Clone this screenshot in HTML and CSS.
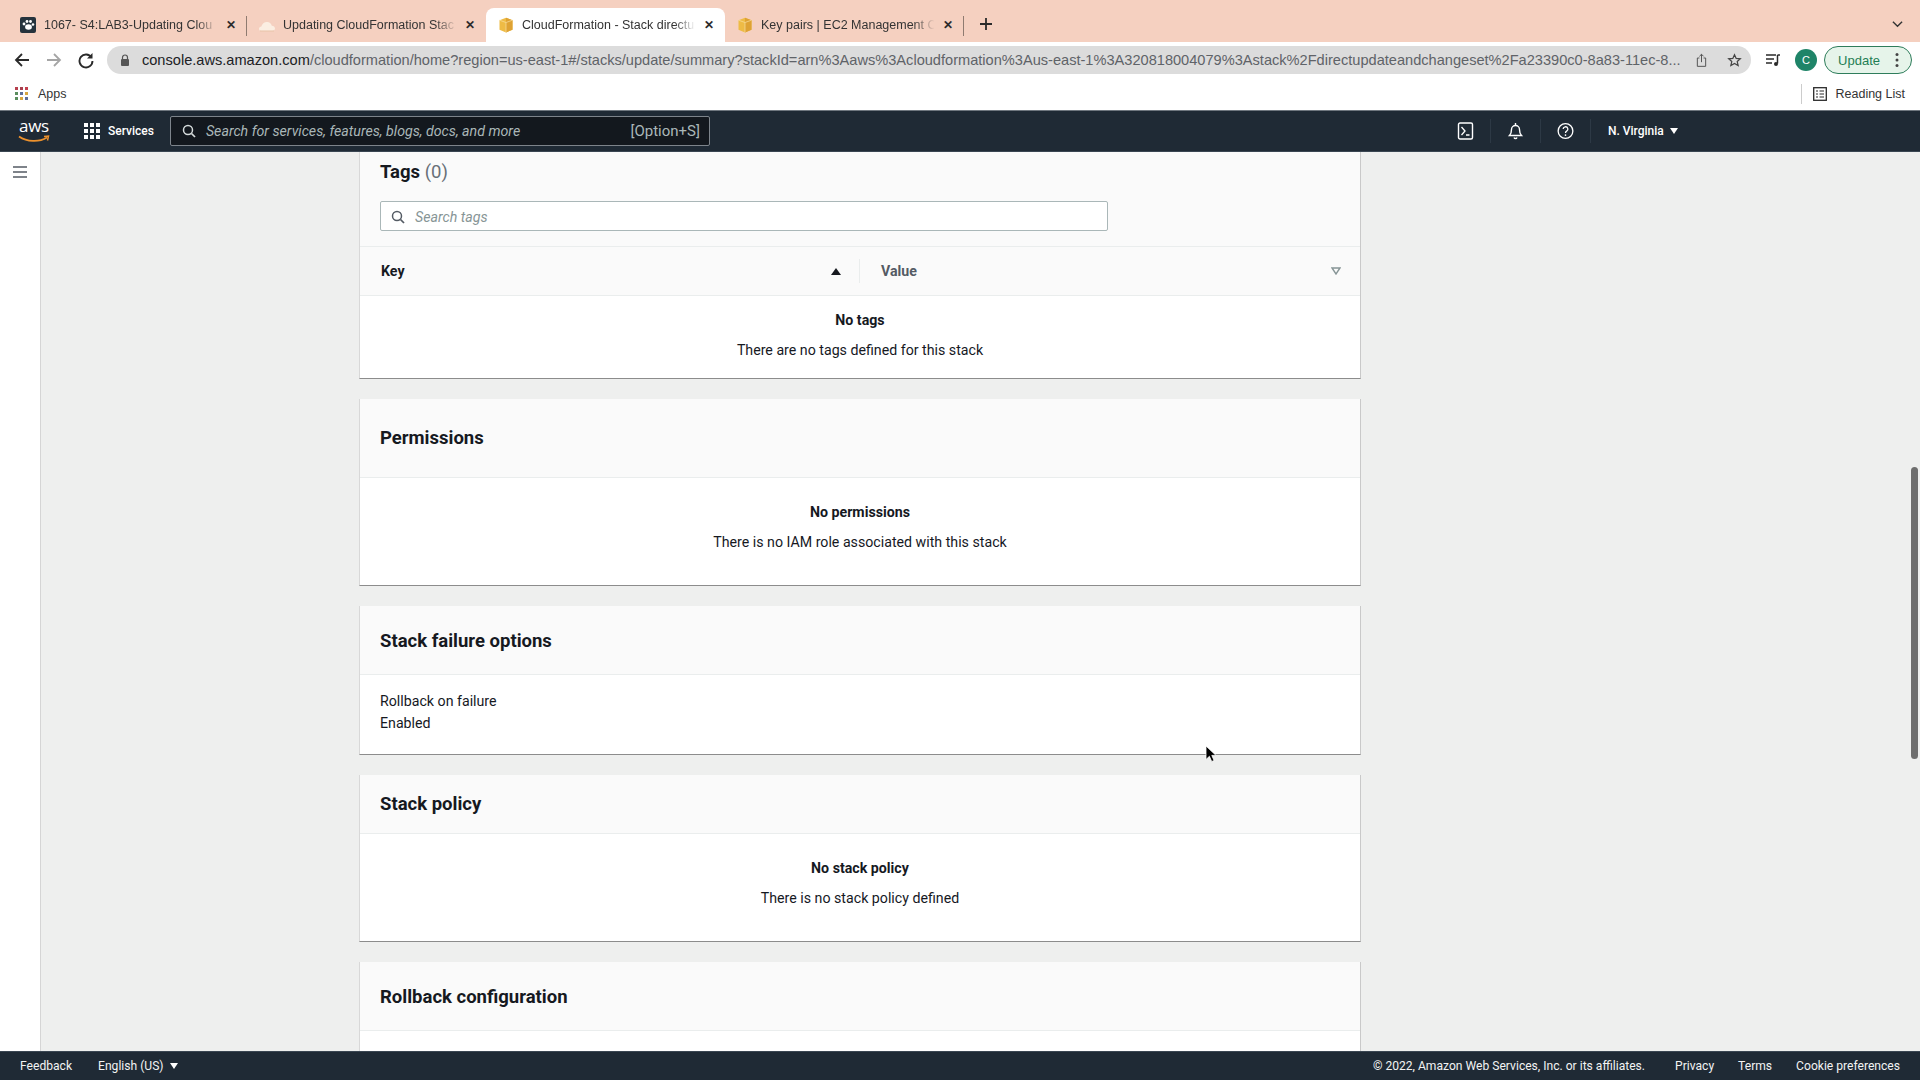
FILE: index.html
```html
<!DOCTYPE html>
<html lang="en">
<head>
    <meta charset="UTF-8">
    <meta name="viewport" content="width=device-width, initial-scale=1.0">
    <title>CloudFormation - Stack directupdateandchangeset</title>
    <link rel="stylesheet" href="styles.css">
</head>
<body>
    <div class="tabstrip">
        <div class="tab tab-sep">
            <svg class="favicon" viewBox="0 0 16 16"><rect width="16" height="16" rx="2" fill="#25333d"/><ellipse cx="8.5" cy="10" rx="3.4" ry="2.8" fill="#fff"/><circle cx="4" cy="7" r="1.4" fill="#fff"/><circle cx="7" cy="4.5" r="1.4" fill="#fff"/><circle cx="10.5" cy="4.5" r="1.4" fill="#fff"/><circle cx="13" cy="7.5" r="1.3" fill="#fff"/></svg>
            <span class="tab-title">1067- S4:LAB3-Updating Clou</span>
            <span class="tab-close">&#10005;</span>
        </div>
        <div class="tab">
            <svg class="favicon" viewBox="0 0 16 16"><path d="M2.500 14C1 14 0 13 0 11.700s1-2.300 2.400-2.300C3 7 5.200 5 8 5c2.400 0 4.300 1.600 4.800 3.800 1.800 0 3.200 1.200 3.200 2.700S14.700 14 13.200 14z" fill="#fbeee2"/><path d="M1 14h14" stroke="#e8c3a8" stroke-width="1"/></svg>
            <span class="tab-title">Updating CloudFormation Stac</span>
            <span class="tab-close">&#10005;</span>
        </div>
        <div class="tab tab-active">
            <svg class="favicon" viewBox="0 0 16 16"><path d="M1.500 3.200 8 .8l6.500 2.400v9.600L8 15.400l-6.500-2.600z" fill="#eebb45"/><path d="M8 .8l6.500 2.400v9.600L8 15.400z" fill="#dea233"/><path d="M1.500 3.200 8 5.500l6.500-2.300M8 5.500v9.900" fill="none" stroke="#f8e0a0" stroke-width=".7"/></svg>
            <span class="tab-title">CloudFormation - Stack directu</span>
            <span class="tab-close">&#10005;</span>
        </div>
        <div class="tab tab-sep">
            <svg class="favicon" viewBox="0 0 16 16"><path d="M1.500 3.200 8 .8l6.500 2.400v9.600L8 15.400l-6.500-2.600z" fill="#eebb45"/><path d="M8 .8l6.500 2.400v9.600L8 15.400z" fill="#dea233"/><path d="M1.500 3.200 8 5.500l6.500-2.300M8 5.500v9.900" fill="none" stroke="#f8e0a0" stroke-width=".7"/></svg>
            <span class="tab-title">Key pairs | EC2 Management C</span>
            <span class="tab-close">&#10005;</span>
        </div>
        <svg class="new-tab" viewBox="0 0 14 14"><path d="M7 1v12M1 7h12" stroke="#2b2b2b" stroke-width="1.800"/></svg>
        <svg class="tab-menu" viewBox="0 0 12 8"><path d="M1 1.500 6 6.500l5-5" fill="none" stroke="#333" stroke-width="1.500"/></svg>
    </div>

    <div class="toolbar">
        <svg class="tool-btn" viewBox="0 0 18 18"><path d="M16 9H3M9 3 3 9l6 6" fill="none" stroke="#2a2a2a" stroke-width="1.800"/></svg>
        <svg class="tool-btn" viewBox="0 0 18 18"><path d="M2 9h13M9 3l6 6-6 6" fill="none" stroke="#a5a5a5" stroke-width="1.800"/></svg>
        <svg class="tool-btn" viewBox="0 0 18 18"><path d="M14.500 6.500A6.500 6.500 0 1 0 15.500 10" fill="none" stroke="#2a2a2a" stroke-width="1.900"/><path d="M15.500 2v5.500H10z" fill="#2a2a2a"/></svg>
        <div class="omnibox">
            <svg class="lock" viewBox="0 0 10 12"><path d="M2.500 5V3.500a2.500 2.500 0 0 1 5 0V5" fill="none" stroke="#555" stroke-width="1.200"/><rect x="1" y="5" width="8" height="7" rx="1" fill="#555"/></svg>
            <span class="url"><span class="url-host">console.aws.amazon.com</span>/cloudformation/home?region=us-east-1#/stacks/update/summary?stackId=arn%3Aaws%3Acloudformation%3Aus-east-1%3A320818004079%3Astack%2Fdirectupdateandchangeset%2Fa23390c0-8a83-11ec-8...</span>
            <svg class="omni-icon" viewBox="0 0 14 18"><path d="M4.500 6H2v10h10V6H9.500M7 11V1.500M4.500 4 7 1.500 9.500 4" fill="none" stroke="#555" stroke-width="1.200"/></svg>
            <svg class="omni-icon" viewBox="0 0 16 16"><path d="M8 1.800l1.800 4 4.400.4-3.300 2.900 1 4.300L8 11.200l-3.900 2.200 1-4.300-3.300-2.900 4.400-.4z" fill="none" stroke="#444" stroke-width="1.300"/></svg>
        </div>
        <svg class="media-icon" viewBox="0 0 16 14"><path d="M1 2h10M1 6h8M1 10h6" stroke="#2a2a2a" stroke-width="1.500"/><path d="M12.500 2v8.500" stroke="#2a2a2a" stroke-width="1.500"/><path d="M12.500 2H15" stroke="#2a2a2a" stroke-width="1.500"/><circle cx="11" cy="11" r="2" fill="#2a2a2a"/></svg>
        <div class="avatar">C</div>
        <div class="update-btn">
            <span>Update</span>
            <svg class="update-dots" viewBox="0 0 4 16"><circle cx="2" cy="2.500" r="1.500"/><circle cx="2" cy="8" r="1.500"/><circle cx="2" cy="13.500" r="1.500"/></svg>
        </div>
    </div>

    <div class="bookmarks">
        <svg class="apps-icon" viewBox="0 0 14 14">
            <rect width="3" height="3" fill="#b6404e"/><rect x="5" width="3" height="3" fill="#a8404e"/><rect x="10" width="3" height="3" fill="#c2404e"/>
            <rect y="5" width="3" height="3" fill="#5a8d5e"/><rect x="5" y="5" width="3" height="3" fill="#5f6f99"/><rect x="10" y="5" width="3" height="3" fill="#d9a63f"/>
            <rect y="10" width="3" height="3" fill="#5a8d5e"/><rect x="5" y="10" width="3" height="3" fill="#d9a63f"/><rect x="10" y="10" width="3" height="3" fill="#5f6f99"/>
        </svg>
        <span class="bookmark-label">Apps</span>
        <div class="reading-list">
            <svg class="reading-icon" viewBox="0 0 14 14"><rect x=".7" y=".7" width="12.600" height="12.600" fill="none" stroke="#2a2a2a" stroke-width="1.300"/><path d="M3 4h2M6.500 4H11M3 7h2M6.500 7H11M3 10h2M6.500 10H11" stroke="#2a2a2a" stroke-width="1.200"/></svg>
            <span class="bookmark-label">Reading List</span>
        </div>
    </div>

    <nav class="topnav">
        <div class="aws-logo">
            <span class="aws-word">aws</span>
            <svg class="aws-smile" viewBox="0 0 32 8"><path d="M1 1.500C9 7 21 7.500 29 2.500" fill="none" stroke="#ec912d" stroke-width="1.800"/><path d="M26 1.500l4.500-.5-1 4.500" fill="none" stroke="#ec912d" stroke-width="1.500"/></svg>
        </div>
        <div class="services">
            <svg class="grid-icon" viewBox="0 0 16 16" fill="#fff"><rect width="4" height="4"/><rect x="6" width="4" height="4"/><rect x="12" width="4" height="4"/><rect y="6" width="4" height="4"/><rect x="6" y="6" width="4" height="4"/><rect x="12" y="6" width="4" height="4"/><rect y="12" width="4" height="4"/><rect x="6" y="12" width="4" height="4"/><rect x="12" y="12" width="4" height="4"/></svg>
            <span>Services</span>
        </div>
        <div class="nav-search">
            <svg class="search-icon" viewBox="0 0 14 14"><circle cx="6" cy="6" r="4.500" fill="none" stroke="#d5dbdb" stroke-width="1.500"/><path d="M9.500 9.500 13 13" stroke="#d5dbdb" stroke-width="1.700"/></svg>
            <span class="nav-placeholder">Search for services, features, blogs, docs, and more</span>
            <span class="nav-shortcut">[Option+S]</span>
        </div>
        <div class="nav-actions">
            <div class="nav-icon">
                <svg viewBox="0 0 16 18"><rect x="1" y="1" width="14" height="16" rx="1.500" fill="none" stroke="#fff" stroke-width="1.400"/><path d="M4 5l3.500 4L4 13M8.500 13H12" fill="none" stroke="#fff" stroke-width="1.300"/></svg>
            </div>
            <div class="nav-icon">
                <svg viewBox="0 0 16 18"><path d="M2 13.500c1.500-1.500 2-3 2-6a4 4 0 0 1 8 0c0 3 .5 4.500 2 6z" fill="none" stroke="#fff" stroke-width="1.400"/><path d="M6.500 15.500a1.600 1.600 0 0 0 3 0M8 1v2" fill="none" stroke="#fff" stroke-width="1.400"/></svg>
            </div>
            <div class="nav-icon">
                <svg viewBox="0 0 18 18"><circle cx="9" cy="9" r="7.800" fill="none" stroke="#fff" stroke-width="1.400"/><path d="M6.500 7a2.500 2.500 0 1 1 3.700 2.200c-.9.500-1.200 1-1.200 2" fill="none" stroke="#fff" stroke-width="1.400"/><circle cx="9" cy="13.300" r=".9" fill="#fff"/></svg>
            </div>
            <span class="region">N. Virginia</span>
            <span class="caret"></span>
        </div>
    </nav>

    <div class="content">
        <aside class="sidebar">
            <svg class="hamburger" viewBox="0 0 14 12"><path d="M0 1h14M0 6h14M0 11h14" stroke="#545b64" stroke-width="1.500"/></svg>
        </aside>
        <main class="main">
            <section class="card">
                <div class="tags-head">
                    <h2 class="card-title">Tags <span class="count">(0)</span></h2>
                    <div class="tag-search">
                        <svg class="search-icon" viewBox="0 0 14 14"><circle cx="6" cy="6" r="4.500" fill="none" stroke="#545b64" stroke-width="1.500"/><path d="M9.500 9.500 13 13" stroke="#545b64" stroke-width="1.700"/></svg>
                        <span class="tag-placeholder">Search tags</span>
                    </div>
                </div>
                <div class="table-head">
                    <div class="col col-key">
                        <span>Key</span>
                        <span class="sort-up"></span>
                    </div>
                    <div class="col col-value">
                        <span>Value</span>
                        <svg class="sort-down" viewBox="0 0 10 8"><path d="M1 1h8L5 7z" fill="none" stroke="#879596" stroke-width="1.400"/></svg>
                    </div>
                </div>
                <div class="empty empty-tags">
                    <strong>No tags</strong>
                    <span>There are no tags defined for this stack</span>
                </div>
            </section>

            <section class="card">
                <div class="card-head head-lg"><h2 class="card-title">Permissions</h2></div>
                <div class="empty">
                    <strong>No permissions</strong>
                    <span>There is no IAM role associated with this stack</span>
                </div>
            </section>

            <section class="card">
                <div class="card-head head-md"><h2 class="card-title">Stack failure options</h2></div>
                <div class="detail">
                    <div>Rollback on failure</div>
                    <div>Enabled</div>
                </div>
            </section>

            <section class="card">
                <div class="card-head head-sm"><h2 class="card-title">Stack policy</h2></div>
                <div class="empty">
                    <strong>No stack policy</strong>
                    <span>There is no stack policy defined</span>
                </div>
            </section>

            <section class="card">
                <div class="card-head head-md"><h2 class="card-title">Rollback configuration</h2></div>
                <div class="detail"></div>
            </section>
        </main>
    </div>

    <footer class="footer">
        <span>Feedback</span>
        <span class="lang">English (US)</span>
        <span class="caret"></span>
        <span class="copyright">&copy; 2022, Amazon Web Services, Inc. or its affiliates.</span>
        <span class="foot-link">Privacy</span>
        <span class="foot-link">Terms</span>
        <span class="foot-link">Cookie preferences</span>
    </footer>

    <div class="scroll-thumb"></div>
    <svg class="cursor" viewBox="0 0 12 18"><path d="M1 1v13.500l3.400-3.200 2.300 5.200 2.400-1-2.300-5.100H11z" fill="#000" stroke="#fff" stroke-width=".8"/></svg>
</body>
</html>
```

FILE: styles.css
```css
* {
    box-sizing: border-box;
}

body {
    margin: 0;
    height: 100vh;
    display: flex;
    flex-direction: column;
    overflow: hidden;
    font-family: Roboto, "Liberation Sans", sans-serif;
    font-size: 14.2px;
    color: #16191f;
    background-color: #eeefee;
}

/* browser chrome */
.tabstrip {
    height: 42px;
    flex: none;
    display: flex;
    padding: 8px 0 0 8px;
    background-color: #f5d0c0;
    font-family: "Liberation Sans", sans-serif;
}

.tab {
    width: 239px;
    height: 34px;
    display: flex;
    align-items: center;
    padding: 0 6px 0 12px;
    font-size: 12.5px;
    color: #333;
    position: relative;
}

.tab-sep::after {
    content: "";
    position: absolute;
    right: 0;
    top: 8px;
    height: 20px;
    border-right: 1px solid #8f7b70;
}

.tab-active {
    background-color: #fff;
    border-radius: 8px 8px 0 0;
}

.favicon {
    width: 16px;
    height: 16px;
    flex: none;
    margin-right: 8px;
}

.tab-title {
    flex: 1;
    white-space: nowrap;
    -webkit-mask-image: linear-gradient(to right, #000 86%, transparent 98%);
    mask-image: linear-gradient(to right, #000 86%, transparent 98%);
}

.tab-close {
    width: 20px;
    flex: none;
    text-align: center;
    font-size: 12px;
    font-weight: bold;
    color: #2b2b2b;
}

.new-tab {
    width: 14px;
    height: 14px;
    margin: 9px 0 0 15px;
}

.tab-menu {
    width: 11px;
    height: 8px;
    margin: 12px 17px 0 auto;
}

.toolbar {
    height: 37px;
    flex: none;
    display: flex;
    align-items: flex-start;
    padding: 4px 8px 0 13px;
    background-color: #fff;
}

.tool-btn {
    width: 18px;
    height: 18px;
    margin: 5px 14px 0 0;
}

.omnibox {
    width: 1646px;
    height: 28px;
    margin-left: -2px;
    display: flex;
    align-items: center;
    padding: 0 9px 0 13px;
    background-color: #dcdcdc;
    border-radius: 14px;
}

.lock {
    width: 10px;
    height: 12px;
    margin-right: 12px;
}

.url {
    flex: 1;
    white-space: nowrap;
    font-family: "Liberation Sans", sans-serif;
    font-size: 14.6px;
    color: #5f6368;
}

.url-host {
    color: #202124;
}

.omni-icon {
    width: 13px;
    height: 15px;
    margin-left: 14px;
    flex: none;
}

.omni-icon:last-child {
    width: 15px;
    margin-left: 19px;
}

.media-icon {
    width: 16px;
    height: 14px;
    margin: 7px 0 0 14px;
}

.avatar {
    width: 22px;
    height: 22px;
    margin: 3px 0 0 14px;
    border-radius: 50%;
    background-color: #1f8468;
    color: #fff;
    font: 11px/22px "Liberation Sans", sans-serif;
    text-align: center;
}

.update-btn {
    width: 88px;
    height: 28px;
    margin-left: 7px;
    display: flex;
    align-items: center;
    justify-content: space-between;
    padding: 0 12px 0 13px;
    background-color: #e6f4ea;
    border: 1px solid #2e7d5b;
    border-radius: 14px;
    font: 13px "Liberation Sans", sans-serif;
    color: #1e7e55;
}

.update-dots {
    width: 4px;
    height: 16px;
    fill: #444;
}

.bookmarks {
    height: 31px;
    flex: none;
    display: flex;
    align-items: center;
    padding: 0 15px 2px;
    background-color: #fff;
    font: 12.5px "Liberation Sans", sans-serif;
    color: #333;
}

.apps-icon {
    width: 14px;
    height: 14px;
    margin-right: 9px;
}

.reading-list {
    margin-left: auto;
    height: 20px;
    display: flex;
    align-items: center;
    padding-left: 11px;
    border-left: 1px solid #ccc;
}

.reading-icon {
    width: 14px;
    height: 14px;
    margin-right: 9px;
}

/* aws console header */
.topnav {
    height: 42px;
    flex: none;
    display: flex;
    align-items: center;
    padding: 0 0 1px 18px;
    background-color: #1f2a35;
    border-top: 1px solid #6f777f;
    border-bottom: 1px solid #3a4652;
    color: #fff;
}

.aws-logo {
    width: 32px;
    height: 28px;
    position: relative;
}

.aws-word {
    display: block;
    text-align: center;
    font: 17px/17px "Open Sans", sans-serif;
    letter-spacing: -0.3px;
}

.aws-smile {
    position: absolute;
    left: 0;
    bottom: 2px;
    width: 32px;
    height: 8px;
}

.services {
    display: flex;
    align-items: center;
    margin-left: 34px;
    font-size: 12px;
    font-weight: 500;
}

.grid-icon {
    width: 16px;
    height: 16px;
    margin-right: 8px;
}

.nav-search {
    width: 540px;
    height: 30px;
    margin-left: 16px;
    display: flex;
    align-items: center;
    padding: 0 9px 0 11px;
    background-color: #13181e;
    border: 1px solid #7d848b;
    border-radius: 2px;
    color: #aab7b8;
}

.search-icon {
    width: 14px;
    height: 14px;
    flex: none;
}

.nav-placeholder {
    margin-left: 10px;
    font-style: italic;
}

.nav-shortcut {
    margin-left: auto;
    font-size: 15px;
}

.nav-actions {
    display: flex;
    align-items: center;
    margin-left: 731px;
}

.nav-icon {
    width: 50px;
    height: 24px;
    display: flex;
    align-items: center;
    justify-content: center;
    border-right: 1px solid #2d3945;
}

.nav-icon svg {
    width: 17px;
    height: 18px;
}

.region {
    margin-left: 17px;
    font-size: 12px;
    font-weight: 500;
}

.caret {
    width: 0;
    height: 0;
    margin-left: 6px;
    border-left: 4px solid transparent;
    border-right: 4px solid transparent;
    border-top: 6px solid #fff;
}

/* page */
.content {
    flex: 1;
    min-height: 0;
    display: flex;
    overflow: hidden;
}

.sidebar {
    width: 41px;
    flex: none;
    padding: 14px 0 0 13px;
    background-color: #fff;
    border-right: 1px solid #d5d5d5;
}

.hamburger {
    display: block;
    width: 14px;
    height: 12px;
}

.main {
    flex: 1;
    padding-left: 318px;
}

.card {
    width: 1002px;
    margin-bottom: 20px;
    background-color: #fff;
    border-left: 1px solid #d8d8d8;
    border-right: 1px solid #c9c9c9;
    border-bottom: 1px solid #8c8c8c;
}

.card-head {
    display: flex;
    align-items: center;
    padding: 0 20px;
    background-color: #fafafa;
    border-bottom: 1px solid #eaeded;
}

.head-lg {
    height: 79px;
}

.head-md {
    height: 69px;
    padding-top: 2px;
}

.head-sm {
    height: 59px;
}

.card-title {
    margin: 0;
    font-size: 18.5px;
    font-weight: 700;
    line-height: 24px;
}

.count {
    font-weight: 400;
    color: #687078;
}

.tags-head {
    height: 95px;
    padding: 8px 20px 0;
    background-color: #fafafa;
    border-bottom: 1px solid #eaeded;
}

.tag-search {
    width: 728px;
    height: 30px;
    margin-top: 17px;
    display: flex;
    align-items: center;
    padding: 1px 10px 0;
    background-color: #fff;
    border: 1px solid #aab7b8;
    border-radius: 2px;
}

.tag-placeholder {
    margin-left: 10px;
    font-style: italic;
    color: #879596;
}

.table-head {
    height: 49px;
    display: flex;
    align-items: center;
    background-color: #fafafa;
    border-bottom: 1px solid #eaeded;
    font-weight: 700;
}

.col {
    height: 24px;
    display: flex;
    align-items: center;
    justify-content: space-between;
}

.col-key {
    width: 500px;
    padding: 0 18px 0 21px;
    border-right: 1px solid #eaeded;
}

.col-value {
    flex: 1;
    padding: 0 19px 0 21px;
    color: #545b64;
}

.sort-up {
    width: 0;
    height: 0;
    border-left: 5px solid transparent;
    border-right: 5px solid transparent;
    border-bottom: 7px solid #16191f;
}

.sort-down {
    width: 10px;
    height: 8px;
}

.empty {
    display: flex;
    flex-direction: column;
    align-items: center;
    gap: 8px;
    padding: 23px 0 32px;
    line-height: 22px;
}

.empty-tags {
    padding: 13px 0 17px;
}

.detail {
    padding: 15px 20px 20px;
    line-height: 22px;
    min-height: 22px;
}

.footer {
    height: 29px;
    flex: none;
    display: flex;
    align-items: center;
    padding: 0 20px;
    background-color: #1f2a35;
    border-top: 1px solid #3a4652;
    color: #f2f3f3;
    font-size: 12.1px;
}

.lang {
    margin-left: 26px;
}

.copyright {
    margin-left: auto;
}

.foot-link {
    margin-left: 24px;
}

.copyright + .foot-link {
    margin-left: 30px;
}

.scroll-thumb {
    position: absolute;
    left: 1911px;
    top: 467px;
    width: 7px;
    height: 292px;
    border-radius: 4px;
    background-color: #6e6e6e;
}

.cursor {
    position: absolute;
    left: 1205px;
    top: 745px;
    width: 12px;
    height: 18px;
}
```
